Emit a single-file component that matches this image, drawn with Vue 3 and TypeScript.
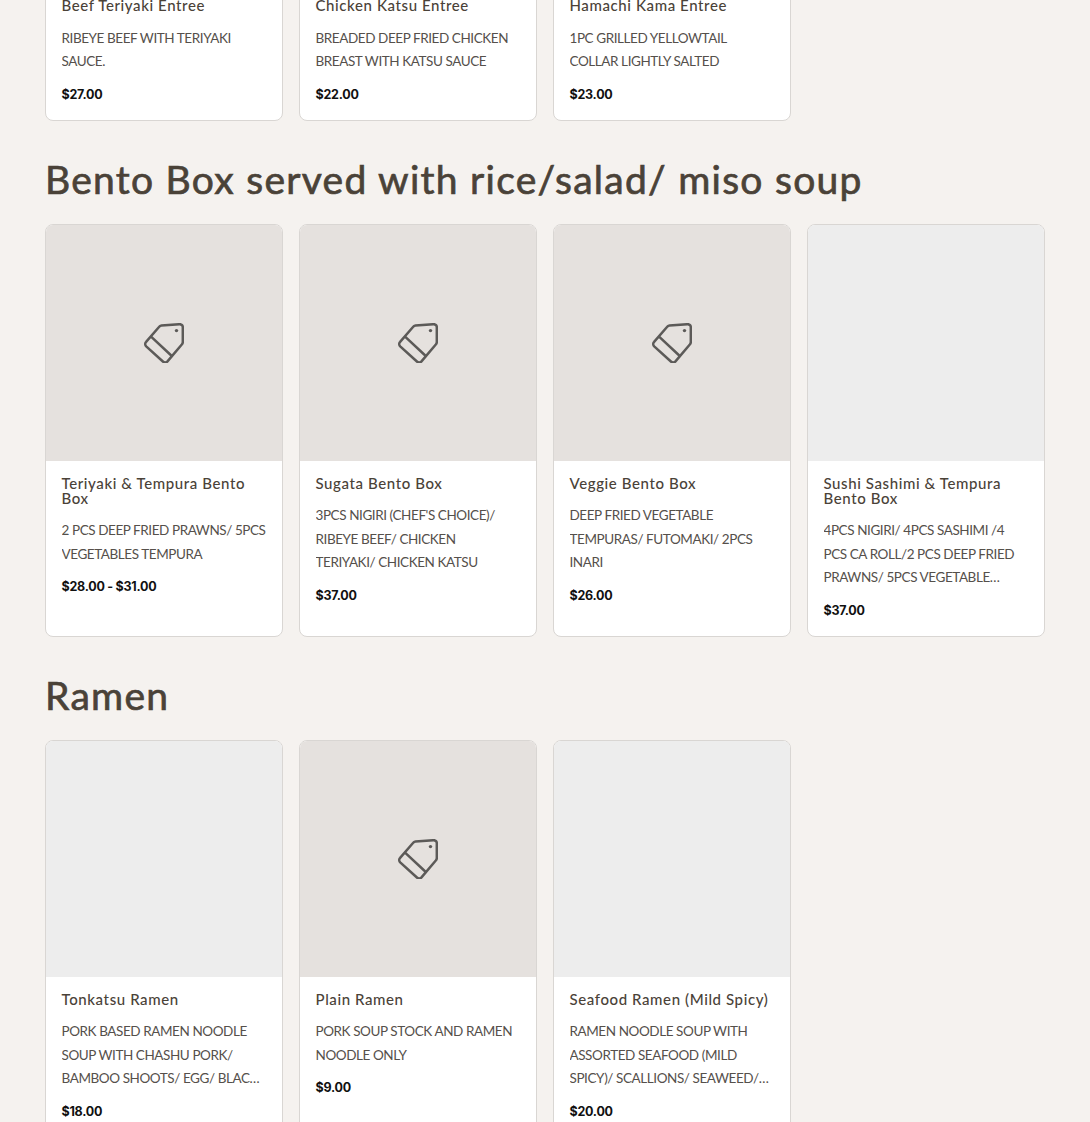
<template>
  <div class="page">
    <section v-for="section in sections" :key="section.title" class="section">
      <h2 v-if="section.title" class="section-title">{{ section.title }}</h2>
      <div class="grid">
        <article v-for="item in section.items" :key="item.name" class="card">
          <div class="thumb" :class="{ empty: !item.tag }">
            <svg v-if="item.tag" class="tag" viewBox="0 0 40 40" fill="none" stroke="#5c5a58" stroke-width="2.5" stroke-linejoin="round" stroke-linecap="round">
              <path d="M17.5 2.4 35.5 1.2a3 3 0 0 1 3.3 3.1L38.8 19a3.5 3.5 0 0 1-1 2.5L23.5 38.4a3.2 3.2 0 0 1-4.6.1L2.2 23.4a3.2 3.2 0 0 1-.1-4.5L15 4a3.8 3.8 0 0 1 2.5-1.6Z" />
              <path d="M7.6 14.2 27.8 33" />
              <circle cx="32.5" cy="7.6" r="1.7" fill="#5c5a58" stroke="none" />
            </svg>
          </div>
          <div class="body">
            <h3 class="name">{{ item.name }}</h3>
            <p class="desc">{{ item.desc }}</p>
            <div class="price">{{ item.price }}</div>
          </div>
        </article>
      </div>
    </section>
  </div>
</template>

<script setup lang="ts">
interface Item {
  name: string
  desc: string
  price: string
  tag: boolean
}

interface Section {
  title: string
  items: Item[]
}

const sections: Section[] = [
  {
    title: '',
    items: [
      { name: 'Beef Teriyaki Entree', desc: 'RIBEYE BEEF WITH TERIYAKI SAUCE.', price: '$27.00', tag: true },
      { name: 'Chicken Katsu Entree', desc: 'BREADED DEEP FRIED CHICKEN BREAST WITH KATSU SAUCE', price: '$22.00', tag: true },
      { name: 'Hamachi Kama Entree', desc: '1PC GRILLED YELLOWTAIL COLLAR LIGHTLY SALTED', price: '$23.00', tag: true }
    ]
  },
  {
    title: 'Bento Box served with rice/salad/ miso soup',
    items: [
      { name: 'Teriyaki & Tempura Bento Box', desc: '2 PCS DEEP FRIED PRAWNS/ 5PCS VEGETABLES TEMPURA', price: '$28.00 - $31.00', tag: true },
      { name: 'Sugata Bento Box', desc: "3PCS NIGIRI (CHEF'S CHOICE)/ RIBEYE BEEF/ CHICKEN TERIYAKI/\u00a0CHICKEN KATSU", price: '$37.00', tag: true },
      { name: 'Veggie Bento Box', desc: 'DEEP FRIED VEGETABLE TEMPURAS/ FUTOMAKI/ 2PCS INARI', price: '$26.00', tag: true },
      { name: 'Sushi Sashimi & Tempura Bento Box', desc: '4PCS NIGIRI/ 4PCS SASHIMI /4 PCS CA ROLL/2 PCS DEEP FRIED PRAWNS/ 5PCS VEGETABLE TEMPURA/ MISO SOUP', price: '$37.00', tag: false }
    ]
  },
  {
    title: 'Ramen',
    items: [
      { name: 'Tonkatsu Ramen', desc: 'PORK BASED RAMEN NOODLE SOUP WITH CHASHU PORK/ BAMBOO SHOOTS/ EGG/ BLACK FUNGUS/ SCALLIONS', price: '$18.00', tag: false },
      { name: 'Plain Ramen', desc: 'PORK SOUP STOCK AND RAMEN NOODLE ONLY', price: '$9.00', tag: true },
      { name: 'Seafood Ramen (Mild Spicy)', desc: 'RAMEN NOODLE SOUP WITH ASSORTED SEAFOOD (MILD SPICY)/ SCALLIONS/ SEAWEED/ FISH CAKE/ EGG', price: '$20.00', tag: false }
    ]
  }
]
</script>

<style>
html,
body {
  margin: 0;
  height: 1122px;
  overflow: hidden;
  background: #f5f2ef;
}
</style>

<style scoped>
.page {
  margin-top: -254px;
  padding: 0 45px;
  font-family: Lato, "Liberation Sans", sans-serif;
}
.section-title {
  margin: 34px 0 21px;
  height: 48px;
  font-size: 39px;
  line-height: 48px;
  font-weight: 400;
  letter-spacing: 1.27px;
  -webkit-text-stroke: 0.7px #4a4238;
  color: #4a4238;
}
.grid {
  display: grid;
  grid-template-columns: repeat(4, 238px);
  gap: 16px;
}
.card {
  display: flex;
  flex-direction: column;
  background: #fff;
  border: 1px solid #d9d6d3;
  border-radius: 8px;
  overflow: hidden;
}
.thumb {
  height: 236px;
  display: flex;
  align-items: center;
  justify-content: center;
  background: #e5e1de;
}
.thumb.empty {
  background: #ededed;
}
.tag {
  width: 40px;
  height: 40px;
}
.body {
  padding: 15px 15px 17px 15.5px;
}
.name {
  margin: 0;
  font-size: 15px;
  line-height: 15px;
  font-weight: 500;
  letter-spacing: 0.6px;
  color: #4a4238;
}
.desc {
  margin: 13.5px 0 0;
  font-size: 13.5px;
  line-height: 23.5px;
  letter-spacing: -0.42px;
  color: #55504b;
  display: -webkit-box;
  -webkit-line-clamp: 3;
  -webkit-box-orient: vertical;
  overflow: hidden;
}
.price {
  margin-top: 13px;
  font-family: Inter, sans-serif;
  font-size: 12.5px;
  line-height: 16px;
  font-weight: 700;
  letter-spacing: -0.25px;
  color: #111;
}
</style>
